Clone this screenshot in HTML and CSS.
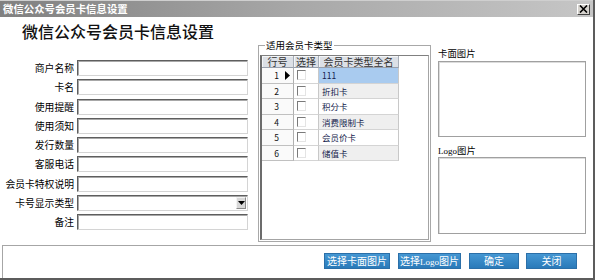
FILE: index.html
```html
<!DOCTYPE html>
<html lang="zh-CN">
<head>
<meta charset="utf-8">
<link rel="stylesheet" href="styles.css">
</head>
<body>
<div class="window">
  <div class="titlebar">
    <span class="title">微信公众号会员卡信息设置</span>
    <span class="close"><svg width="9" height="8" viewBox="0 0 9 8"><path d="M1 0.5 L8 7.5 M8 0.5 L1 7.5" stroke="#000" stroke-width="1.6"/></svg></span>
  </div>
  <div class="content">
    <div class="left">
      <h1 class="heading">微信公众号会员卡信息设置</h1>
      <div class="form">
        <span class="label">商户名称</span><span class="input"></span>
        <span class="label">卡名</span><span class="input"></span>
        <span class="label">使用提醒</span><span class="input"></span>
        <span class="label">使用须知</span><span class="input"></span>
        <span class="label">发行数量</span><span class="input"></span>
        <span class="label">客服电话</span><span class="input"></span>
        <span class="label">会员卡特权说明</span><span class="input"></span>
        <span class="label">卡号显示类型</span><span class="input select"><span class="drop"><svg width="7" height="4" viewBox="0 0 7 4"><path d="M0 0 H7 L3.5 4 Z" fill="#000"/></svg></span></span>
        <span class="label">备注</span><span class="input"></span>
      </div>
    </div>
    <fieldset class="group">
      <legend class="legend">适用会员卡类型</legend>
      <div class="grid">
        <div class="table">
          <div class="hcell">行号</div><div class="hcell">选择</div><div class="hcell">会员卡类型全名</div>
          <div class="rcell"><span class="num">1</span><span class="ind"><svg width="5" height="9" viewBox="0 0 5 9"><path d="M0 0 L5 4.5 L0 9 Z" fill="#000"/></svg></span></div><div class="ccell"><span class="chk"></span></div><div class="ncell sel">111</div>
          <div class="rcell"><span class="num">2</span><span class="ind"></span></div><div class="ccell"><span class="chk"></span></div><div class="ncell alt">折扣卡</div>
          <div class="rcell"><span class="num">3</span><span class="ind"></span></div><div class="ccell"><span class="chk"></span></div><div class="ncell">积分卡</div>
          <div class="rcell"><span class="num">4</span><span class="ind"></span></div><div class="ccell"><span class="chk"></span></div><div class="ncell alt">消费限制卡</div>
          <div class="rcell"><span class="num">5</span><span class="ind"></span></div><div class="ccell"><span class="chk"></span></div><div class="ncell">会员价卡</div>
          <div class="rcell"><span class="num">6</span><span class="ind"></span></div><div class="ccell"><span class="chk"></span></div><div class="ncell alt">储值卡</div>
        </div>
      </div>
    </fieldset>
    <div class="pics">
      <div class="plabel first">卡面图片</div>
      <div class="pbox one"></div>
      <div class="plabel second"><span class="latin">Logo</span>图片</div>
      <div class="pbox two"></div>
    </div>
  </div>
  <div class="footer">
    <button class="btn w1">选择卡面图片</button>
    <button class="btn w2">选择<span class="latin">Logo</span>图片</button>
    <button class="btn w3">确定</button>
    <button class="btn w4">关闭</button>
  </div>
</div>
</body>
</html>
```

FILE: styles.css
```css
* { box-sizing: border-box; }
html, body { margin: 0; padding: 0; }
body {
  width: 595px;
  height: 280px;
  overflow: hidden;
  background: #ffffff;
  font-family: "Noto Sans CJK SC", "Noto Sans", sans-serif;
  color: #000;
}
.window {
  width: 595px;
  height: 280px;
  background: #fff;
  border-right: 2px solid #5c5c5c;
  border-bottom: 2px solid #5c5c5c;
  display: flex;
  flex-direction: column;
}
.titlebar {
  height: 17px;
  flex: none;
  display: flex;
  align-items: center;
  justify-content: space-between;
  background: linear-gradient(to right, #808080 0%, #a8a8a8 50%, #c6c6c6 100%);
  border-top: 1px solid #cfcfcf;
}
.title {
  color: #fff;
  font-size: 10.4px;
  line-height: 16px;
  font-weight: bold;
  padding-left: 3px;
}
.close {
  width: 13px;
  height: 11px;
  margin-right: 3px;
  background: #d6d3ce;
  border: 1px solid;
  border-color: #fff #404040 #404040 #fff;
  display: flex;
  align-items: center;
  justify-content: center;
}
.close svg { display: block; }
.content {
  height: 228px;
  flex: none;
  display: flex;
  align-items: flex-start;
}
.left { width: 258px; flex: none; }
.heading {
  margin: 0;
  padding: 4px 0 0 22px;
  font-size: 16px;
  line-height: 20px;
  font-weight: 500;
  color: #111;
}
.form {
  margin-top: 19px;
  display: grid;
  grid-template-columns: 74px 171px;
  grid-auto-rows: 16px;
  column-gap: 3px;
  row-gap: 3.25px;
}
.label {
  text-align: right;
  font-size: 9.8px;
  line-height: 16px;
  white-space: nowrap;
}
.input {
  display: flex;
  justify-content: flex-end;
  align-items: center;
  border: 1px solid;
  border-color: #5e5e5e #d4d4d4 #d4d4d4 #5e5e5e;
  box-shadow: inset 1px 1px 0 #a8a8a8;
  background: #fff;
  padding-right: 1px;
}
.drop {
  width: 10px;
  height: 12px;
  background: #d8d8d8;
  border: 1px solid;
  border-color: #f4f4f4 #8a8a8a #8a8a8a #f4f4f4;
  display: flex;
  align-items: center;
  justify-content: center;
}
.drop svg { display: block; }
.group {
  width: 173px;
  height: 203px;
  flex: none;
  margin: 22px 0 0 0;
  padding: 4px 1px 1px 1px;
  border: 1px solid #a8a8a8;
  min-width: 0;
}
.legend {
  margin-left: 5px;
  padding: 0 1px;
  font-size: 9.5px;
  line-height: 12px;
}
.grid {
  height: 100%;
  background: #fff;
  border-top: 1px solid #808080;
  border-left: 2px solid #6c6c6c;
  border-right: 1px solid #a4a4a4;
  border-bottom: 1px solid #a4a4a4;
}
.table {
  display: grid;
  grid-template-columns: 32px 25px 80px;
  grid-template-rows: 12px repeat(6, 15.5px);
}
.hcell {
  background: #dce0e6;
  border-right: 1px solid #a7aeb8;
  border-bottom: 1px solid #98a0ac;
  box-shadow: inset 1px 1px 0 #f4f6f8;
  font-size: 10px;
  line-height: 11px;
  text-align: center;
  color: #333;
  white-space: nowrap;
}
.rcell {
  display: flex;
  align-items: center;
  justify-content: flex-end;
  border-right: 1px solid #b0b0b0;
  border-bottom: 1px solid #c0c0c0;
  background: #fafafa;
  font-size: 8.5px;
  color: #111;
}
.num { line-height: 10px; }
.ind {
  width: 10px;
  margin-left: 4px;
  display: flex;
  align-items: center;
  justify-content: flex-start;
  padding-left: 2px;
}
.ind svg { display: block; }
.ccell {
  border-right: 1px solid #c8c8c8;
  border-bottom: 1px solid #d4d4d4;
  display: flex;
  align-items: center;
  padding-left: 3px;
}
.chk {
  width: 9px;
  height: 10px;
  background: #fff;
  border: 1px solid;
  border-color: #7a7a7a #e4e4e4 #e4e4e4 #7a7a7a;
}
.ncell {
  border-right: 1px solid #c8c8c8;
  border-bottom: 1px solid #d4d4d4;
  font-size: 8.5px;
  line-height: 14px;
  padding-left: 3px;
  color: #141c4c;
  white-space: nowrap;
}
.ncell.alt { background: #efefef; }
.ncell.sel { background: #a9cbef; }
.pics {
  width: 148px;
  flex: none;
  margin-left: 7px;
}
.plabel {
  font-size: 9.4px;
  line-height: 12px;
}
.plabel.first { margin-top: 30px; }
.plabel.second { margin-top: 7px; }
.pbox {
  margin-top: 2px;
  border: 1px solid #a0a0a0;
  box-shadow: inset 1px 1px 0 #dcdcdc;
  background: #fff;
}
.pbox.one { height: 76px; }
.pbox.two { height: 77px; margin-top: 0; }
.latin { font-family: "Liberation Serif", serif; font-size: 9px; }
.footer {
  height: 33px;
  flex: none;
  margin-left: 2px;
  border-top: 1px solid #a6a6a6;
  border-left: 1px solid #a6a6a6;
  display: flex;
  justify-content: flex-end;
  align-items: flex-start;
  padding: 7px 16px 0 0;
  gap: 7px;
}
.btn {
  height: 16px;
  margin: 0;
  padding: 0;
  border: 1px solid #2b6fa8;
  background: linear-gradient(#4597d3, #2a7ab9);
  color: #fff;
  font-family: "Noto Sans CJK SC", "Noto Sans", sans-serif;
  font-size: 10px;
  line-height: 14px;
  text-align: center;
  white-space: nowrap;
}
.btn .latin { font-size: 9px; }
.w1 { width: 66px; }
.w2 { width: 63px; margin-left: 1px; }
.w3 { width: 50px; margin-left: 1px; }
.w4 { width: 51px; }
```
